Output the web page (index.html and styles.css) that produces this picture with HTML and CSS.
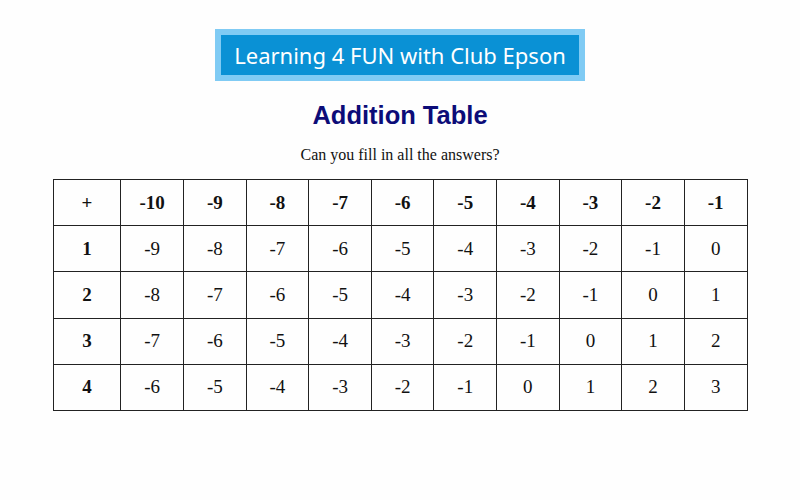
FILE: index.html
```html
<!DOCTYPE html>
<html>
<head>
<meta charset="utf-8">
<link rel="stylesheet" href="styles.css">
</head>
<body>
<div class="page">
  <div class="banner">Learning 4 FUN with Club Epson</div>
  <h1 class="title">Addition Table</h1>
  <p class="subtitle">Can you fill in all the answers?</p>
  <table class="grid">
    <tr class="head"><th>+</th><th>-10</th><th>-9</th><th>-8</th><th>-7</th><th>-6</th><th>-5</th><th>-4</th><th>-3</th><th>-2</th><th>-1</th></tr>
    <tr><th>1</th><td>-9</td><td>-8</td><td>-7</td><td>-6</td><td>-5</td><td>-4</td><td>-3</td><td>-2</td><td>-1</td><td>0</td></tr>
    <tr><th>2</th><td>-8</td><td>-7</td><td>-6</td><td>-5</td><td>-4</td><td>-3</td><td>-2</td><td>-1</td><td>0</td><td>1</td></tr>
    <tr><th>3</th><td>-7</td><td>-6</td><td>-5</td><td>-4</td><td>-3</td><td>-2</td><td>-1</td><td>0</td><td>1</td><td>2</td></tr>
    <tr><th>4</th><td>-6</td><td>-5</td><td>-4</td><td>-3</td><td>-2</td><td>-1</td><td>0</td><td>1</td><td>2</td><td>3</td></tr>
  </table>
</div>
</body>
</html>
```
FILE: styles.css
```css
html, body {
  margin: 0;
  padding: 0;
  background: #fefefe;
}
.page {
  width: 800px;
  height: 500px;
  display: flex;
  flex-direction: column;
  align-items: center;
  padding-top: 29px;
  box-sizing: border-box;
}
.banner {
  border: 6px solid #80cbf4;
  background: #0a91d5;
  color: #ffffff;
  font-family: "Noto Sans", sans-serif;
  font-size: 22px;
  line-height: 30px;
  padding: 5px 10px;
  width: 338px;
  text-align: center;
}
.title {
  margin: 19px 0 0 0;
  font-family: "Liberation Sans", Arial, sans-serif;
  font-weight: bold;
  font-size: 25.5px;
  line-height: 30px;
  color: #0c0c78;
}
.subtitle {
  margin: 14px 0 0 0;
  font-family: "Liberation Serif", serif;
  font-size: 16px;
  line-height: 22px;
  color: #111;
}
.grid {
  margin-top: 13px;
  border-collapse: collapse;
  width: 695px;
  font-family: "Liberation Serif", serif;
  font-size: 19px;
  color: #111;
}
.grid th, .grid td {
  border: 1.5px solid #222;
  height: 45.2px;
  padding: 0;
  text-align: center;
  vertical-align: middle;
  width: 62.6px;
}
.grid tr > :first-child {
  width: 68px;
}
.grid th {
  font-weight: bold;
}
```
